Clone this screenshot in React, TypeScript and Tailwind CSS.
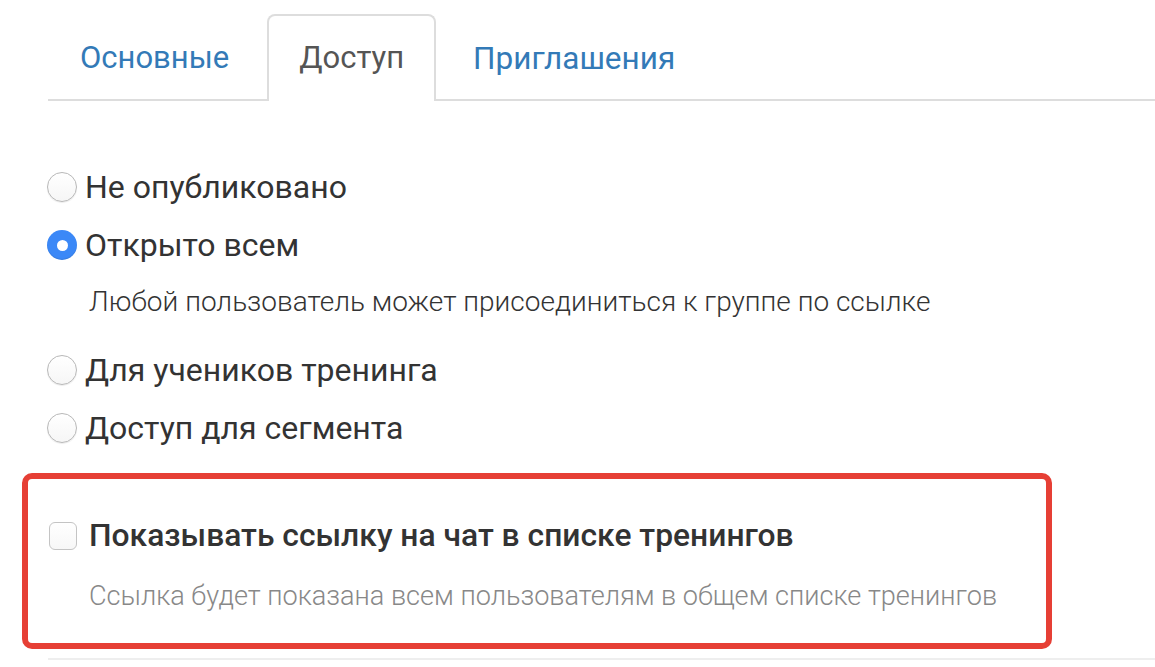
import React from "react";

function Radio({ checked }: { checked?: boolean }) {
  if (checked) {
    return (
      <span className="flex h-[30px] w-[30px] shrink-0 items-center justify-center rounded-full bg-[#3b88f7] shadow-[inset_0_-1px_1px_rgba(0,0,0,0.1)]">
        <span className="h-[11px] w-[11px] rounded-full bg-white" />
      </span>
    );
  }
  return (
    <span className="h-[30px] w-[30px] shrink-0 rounded-full border border-[#b8b8b8] bg-gradient-to-b from-white to-[#f6f6f6] shadow-[0_1px_1px_rgba(0,0,0,0.08)]" />
  );
}

export default function App() {
  const font = { fontFamily: "Roboto, 'Noto Sans', sans-serif" };
  return (
    <div className="min-h-[667px] w-[1155px] overflow-hidden bg-white text-[#333]" style={font}>
      <div className="pt-[15px]">
        <div className="ml-[48px] flex h-[86px] items-end border-b-2 border-[#ddd]">
          <div className="mb-[-2px] mr-[8px] flex h-[85px] items-center pl-[32px] pr-[30px] text-[31px] text-[#337ab7]">
            Основные
          </div>
          <div className="mb-[-2px] mr-[7px] flex h-[87px] items-center rounded-t-[8px] border-2 border-b-0 border-[#ddd] bg-white px-[30px] text-[31px] text-[#555]">
            Доступ
          </div>
          <div className="mb-[-2px] flex h-[85px] items-center px-[30px] text-[31.5px] text-[#337ab7]">
            Приглашения
          </div>
        </div>
      </div>

      <div className="ml-[47px] mt-[66px] flex flex-col">
        <label className="flex h-[40px] items-center gap-[8px] text-[32px] text-[#333]">
          <Radio />
          <span>Не опубликовано</span>
        </label>
        <label className="mt-[18px] flex h-[40px] items-center gap-[8px] text-[32px] text-[#333]">
          <Radio checked />
          <span>Открыто всем</span>
        </label>
        <div className="mt-[20px] flex h-[34px] items-center pl-[42px] text-[28px] font-light text-[#333]">
          Любой пользователь может присоединиться к группе по ссылке
        </div>
        <label className="mt-[31px] flex h-[40px] items-center gap-[8px] text-[32px] text-[#333]">
          <Radio />
          <span>Для учеников тренинга</span>
        </label>
        <label className="mt-[18px] flex h-[40px] items-center gap-[8px] text-[32px] text-[#333]">
          <Radio />
          <span>Доступ для сегмента</span>
        </label>
      </div>

      <div className="ml-[22px] mt-[25px] h-[176px] w-[1030px] rounded-[10px] border-[6px] border-[#e63f35] pl-[21px] pt-[43px]">
        <label className="flex h-[28px] items-center gap-[12px]">
          <span className="h-[28px] w-[28px] shrink-0 rounded-[6px] border border-[#c4c4c4] bg-gradient-to-b from-white to-[#f7f7f7]" />
          <span className="whitespace-nowrap text-[31.8px] font-medium text-[#333]">Показывать ссылку на чат в списке тренингов</span>
        </label>
        <div className="mt-[29px] flex h-[34px] items-center whitespace-nowrap pl-[40px] text-[27.1px] font-light text-[#888]">
          Ссылка будет показана всем пользователям в общем списке тренингов
        </div>
      </div>

      <div className="ml-[48px] mt-[9px] h-[2px] bg-[#eee]" />
    </div>
  );
}
